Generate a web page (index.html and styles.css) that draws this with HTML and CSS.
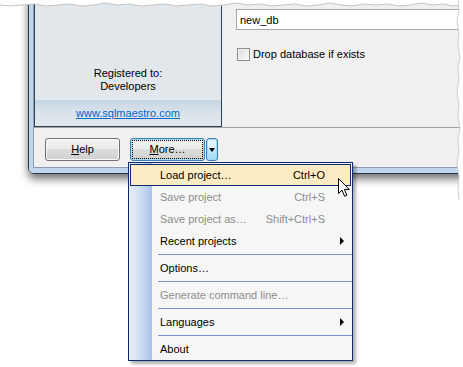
FILE: index.html
```html
<!doctype html>
<html><head>
  <title>Create database - More menu</title>
  <meta charset="utf-8">
  <link rel="stylesheet" href="styles.css">
</head><body>
<div class="shot">
  <div class="window">
    <div class="frame">
      <div class="client">
        <div class="top">
          <div class="panel">
            <div class="reg">Registered to:<br>Developers</div>
            <div class="band"><a href="#">www.sqlmaestro.com</a></div>
          </div>
          <div class="form">
            <input class="dbname" type="text" value="new_db">
            <label class="check"><span class="box"></span>Drop database if exists</label>
          </div>
        </div>
        <div class="buttons">
          <button class="btn"><u>H</u>elp</button>
          <button class="btn focus"><span class="dots"></span><u>M</u>ore&hellip;</button>
          <button class="btn drop"><span class="down"></span></button>
        </div>
      </div>
    </div>
  </div>

  <div class="menu">
    <div class="item hot"><span class="label">Load project&hellip;</span><span class="key">Ctrl+O</span></div>
    <div class="item off"><span class="label">Save project</span><span class="key">Ctrl+S</span></div>
    <div class="item off"><span class="label">Save project as&hellip;</span><span class="key">Shift+Ctrl+S</span></div>
    <div class="item sub"><span class="label">Recent projects</span></div>
    <div class="sep"></div>
    <div class="item"><span class="label">Options&hellip;</span></div>
    <div class="sep"></div>
    <div class="item off"><span class="label">Generate command line&hellip;</span></div>
    <div class="sep"></div>
    <div class="item sub"><span class="label">Languages</span></div>
    <div class="sep"></div>
    <div class="item"><span class="label">About</span></div>
  </div>

  <svg class="pointer" width="13" height="20" viewBox="0 0 13 20">
    <path d="M0.5 0.5 L0.5 15.5 L4 12.2 L6.6 18.3 L8.9 17.3 L6.4 11.4 L11.3 11.4 Z" fill="#fff" stroke="#000" stroke-width="1" stroke-linejoin="miter"/>
  </svg>

  <svg class="torn-top" width="463" height="12" viewBox="0 0 463 12">
    <path d="M0 0 H463 V5 L452 6 L444 4 L433 5 L421 3 L410 5 L398 6 L387 4 L376 5 L364 4 L352 6 L341 5 L330 3 L318 5 L306 6 L295 4 L283 5 L272 6 L260 4 L248 5 L236 3 L224 5 L212 6 L200 4 L188 5 L176 6 L165 4 L153 5 L141 6 L129 4 L117 5 L105 3 L94 5 L82 6 L70 4 L58 5 L46 6 L34 4 L22 5 L10 6 L0 5 Z" fill="#fff"/>
    <path d="M463 5 L452 6 L444 4 L433 5 L421 3 L410 5 L398 6 L387 4 L376 5 L364 4 L352 6 L341 5 L330 3 L318 5 L306 6 L295 4 L283 5 L272 6 L260 4 L248 5 L236 3 L224 5 L212 6 L200 4 L188 5 L176 6 L165 4 L153 5 L141 6 L129 4 L117 5 L105 3 L94 5 L82 6 L70 4 L58 5 L46 6 L34 4 L22 5 L10 6 L0 5" fill="none" stroke="#c4c4c4"/>
  </svg>
  <svg class="torn-right" width="8" height="200" viewBox="0 0 8 200">
    <path d="M8 0 H3 L4 10 L2 21 L4 33 L3 45 L5 57 L3 68 L4 80 L2 92 L4 104 L3 116 L5 128 L3 140 L4 152 L2 164 L4 176 L3 188 L4 200 H8 Z" fill="#fff"/>
    <path d="M3 0 L4 10 L2 21 L4 33 L3 45 L5 57 L3 68 L4 80 L2 92 L4 104 L3 116 L5 128 L3 140 L4 152 L2 164 L4 176 L3 188 L4 200" fill="none" stroke="#cfcfcf"/>
  </svg>
</div>
</body></html>
```

FILE: styles.css
```css
body {
    margin: 0;
    background: #fff;
    font: 11px/13px 'Liberation Sans', Arial, sans-serif;
    color: #000;
}

.shot {
    position: relative;
    width: 463px;
    height: 367px;
    overflow: hidden;
}

/* dialog window */

.window {
    width: 445px;
    margin: -10px 0 0 28px;
    border: 1px solid #27384a;
    border-radius: 0 0 0 6px;
    box-shadow: 0 5px 8px rgba(0, 0, 0, 0.55);
}

.frame {
    padding: 4px 4px 5px 4px;
    background: #bfd7ef;
    border-radius: 0 0 0 5px;
}

.client {
    border: 1px solid #8e9cac;
    background: #f0f0f0;
}

.top {
    display: flex;
    height: 131px;
    border-bottom: 1px solid #a0a0a0;
}

.panel {
    flex: none;
    display: flex;
    flex-direction: column;
    justify-content: flex-end;
    width: 186px;
    border: 1px solid #2b4659;
    border-top: none;
    background: #e2e7eb;
    text-align: center;
}

.reg {
    margin-bottom: 7px;
}

.band {
    height: 26px;
    line-height: 26px;
    background: linear-gradient(#c7d6e4, #dce4eb 55%, #e2e7eb);
}

.band a {
    color: #0066cc;
}

.form {
    flex: 1;
    min-width: 0;
    padding: 13px 0 0 14px;
}

.dbname {
    display: block;
    box-sizing: border-box;
    width: 230px;
    height: 21px;
    margin: 0;
    padding: 0 3px;
    border: 1px solid #a7a7a7;
    background: #fff;
    font: inherit;
    color: #000;
}

.check {
    display: flex;
    align-items: center;
    gap: 3px;
    margin: 18px 0 0 1px;
    height: 13px;
}

.box {
    width: 11px;
    height: 11px;
    border: 1px solid #8e8f8f;
    background: linear-gradient(135deg, #dcdcdc, #fbfbfb);
    box-shadow: inset 0 0 0 1px #f4f4f4;
}

/* button bar */

.buttons {
    display: flex;
    height: 39px;
    padding: 10px 0 0 11px;
    box-sizing: border-box;
}

.btn {
    position: relative;
    width: 75px;
    height: 23px;
    margin: 0 10px 0 0;
    padding: 0;
    border: 1px solid #707070;
    border-radius: 3px;
    background: linear-gradient(#f2f2f2, #ebebeb 50%, #dddddd 50%, #cfcfcf);
    box-shadow: inset 0 0 0 1px #fbfbfb;
    font: inherit;
    color: #000;
}

.focus {
    margin-right: 1px;
    border-color: #3c7fb1;
    box-shadow: inset 0 0 0 1px #9fdcf8;
}

.dots {
    position: absolute;
    left: 1px;
    top: 1px;
    right: 1px;
    bottom: 1px;
    border: 1px dotted #000;
}

.drop {
    width: 12px;
    margin: 0;
    border-color: #3c7fb1;
    box-shadow: inset 0 0 0 1px #9fdcf8;
    background: linear-gradient(#eaf6fd, #d9f0fc 50%, #bee6fd 50%, #a7d9f5);
}

.down {
    position: absolute;
    left: 2px;
    top: 9px;
    border-left: 3px solid transparent;
    border-right: 3px solid transparent;
    border-top: 4px solid #000;
}

/* popup menu */

.menu {
    position: absolute;
    left: 128px;
    top: 162px;
    width: 225px;
    box-sizing: border-box;
    padding-top: 1px;
    border: 1px solid #0c2a6e;
    background: linear-gradient(to right, #e8eff9 0, #d3e0f5 10px, #a9c2ea 23px, #f6f6f6 23px);
    box-shadow: 3px 3px 3px rgba(0, 0, 0, 0.3);
}

.item {
    position: relative;
    display: flex;
    align-items: center;
    justify-content: space-between;
    height: 22px;
    margin: 0 1px;
    padding: 0 26px 0 30px;
    box-sizing: border-box;
    white-space: nowrap;
}

.hot {
    border: 1px solid #0c2a6e;
    padding: 0 25px 0 29px;
    background: #fdebc3;
}

.off {
    color: #8d8d8d;
}

.sub::after {
    content: "";
    position: absolute;
    right: 7px;
    top: 7px;
    border-top: 4px solid transparent;
    border-bottom: 4px solid transparent;
    border-left: 4px solid #000;
}

.sep {
    height: 5px;
    margin-left: 29px;
    background: linear-gradient(transparent 2px, #7592cf 2px, #7592cf 3px, transparent 3px);
}

.pointer {
    position: absolute;
    left: 338px;
    top: 178px;
}

.torn-top {
    position: absolute;
    left: 0;
    top: 0;
}

.torn-right {
    position: absolute;
    right: 0;
    top: 0;
}
```
